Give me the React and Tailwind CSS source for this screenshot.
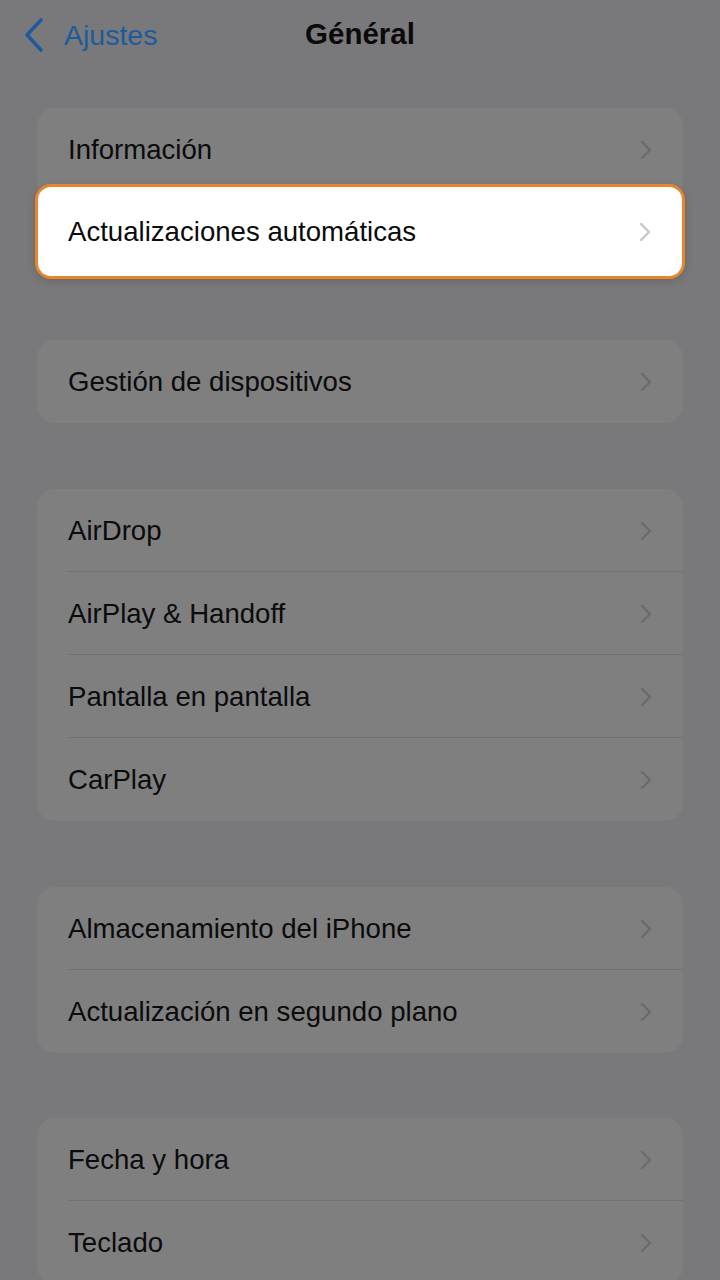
import React from "react";

const Chevron = ({ light }) => (
  <svg width="14" height="22" viewBox="0 0 14 22" className="shrink-0">
    <path d="M3 3 L11 11 L3 19" fill="none" stroke={light ? "#c7c7cc" : "#6b6b6d"} strokeWidth="2.4" strokeLinecap="round" strokeLinejoin="round" />
  </svg>
);

const Row = ({ label, sep }) => (
  <div className="relative flex h-[83px] items-center pl-[31px] pr-[30px]">
    <span className="flex-1 text-[27.6px] text-[#0b0b0b]">{label}</span>
    <Chevron />
    {sep && <div className="absolute bottom-0 left-[31px] right-0 h-px bg-[#717173]" />}
  </div>
);

const Card = ({ items }) => (
  <div className="mx-[37px] overflow-hidden rounded-[18px] bg-[#7f7f80]">
    {items.map((t, i) => (
      <Row key={t} label={t} sep={i < items.length - 1} />
    ))}
  </div>
);

export default function App() {
  return (
    <div
      className="h-[1280px] w-[720px] overflow-hidden bg-[#79797b]"
      style={{ fontFamily: "'Liberation Sans', Roboto, sans-serif" }}
    >
      <div className="relative flex h-[68px] items-center justify-center">
        <div className="absolute left-[22px] top-[14px] flex items-center gap-[18px]">
          <svg width="24" height="38" viewBox="0 0 24 38">
            <path d="M19 4 L5 19 L19 34" fill="none" stroke="#1d5b9c" strokeWidth="3.6" strokeLinecap="round" strokeLinejoin="round" />
          </svg>
          <span className="text-[28.5px] text-[#1d5b9c]">Ajustes</span>
        </div>
        <span className="text-[29.5px] font-bold text-[#0a0a0a]">Général</span>
      </div>

      <div className="mt-[40px] flex flex-col">
        <div className="relative mx-[37px] rounded-[18px] bg-[#7f7f80]">
          <Row label="Información" />
          <div className="h-[83px]" />
          <div className="absolute left-[-2px] right-[-2px] top-[76px] flex h-[95px] items-center rounded-[16px] border-[3px] border-[#e8862b] bg-white pl-[30px] pr-[30px] shadow-[0_2px_8px_rgba(0,0,0,0.15)]">
            <span className="flex-1 text-[27.6px] text-[#0b0b0b]">Actualizaciones automáticas</span>
            <Chevron light />
          </div>
        </div>

        <div className="mt-[66px]">
          <Card items={["Gestión de dispositivos"]} />
        </div>
        <div className="mt-[66px]">
          <Card items={["AirDrop", "AirPlay & Handoff", "Pantalla en pantalla", "CarPlay"]} />
        </div>
        <div className="mt-[66px]">
          <Card items={["Almacenamiento del iPhone", "Actualización en segundo plano"]} />
        </div>
        <div className="mt-[65px]">
          <Card items={["Fecha y hora", "Teclado"]} />
        </div>
      </div>
    </div>
  );
}
